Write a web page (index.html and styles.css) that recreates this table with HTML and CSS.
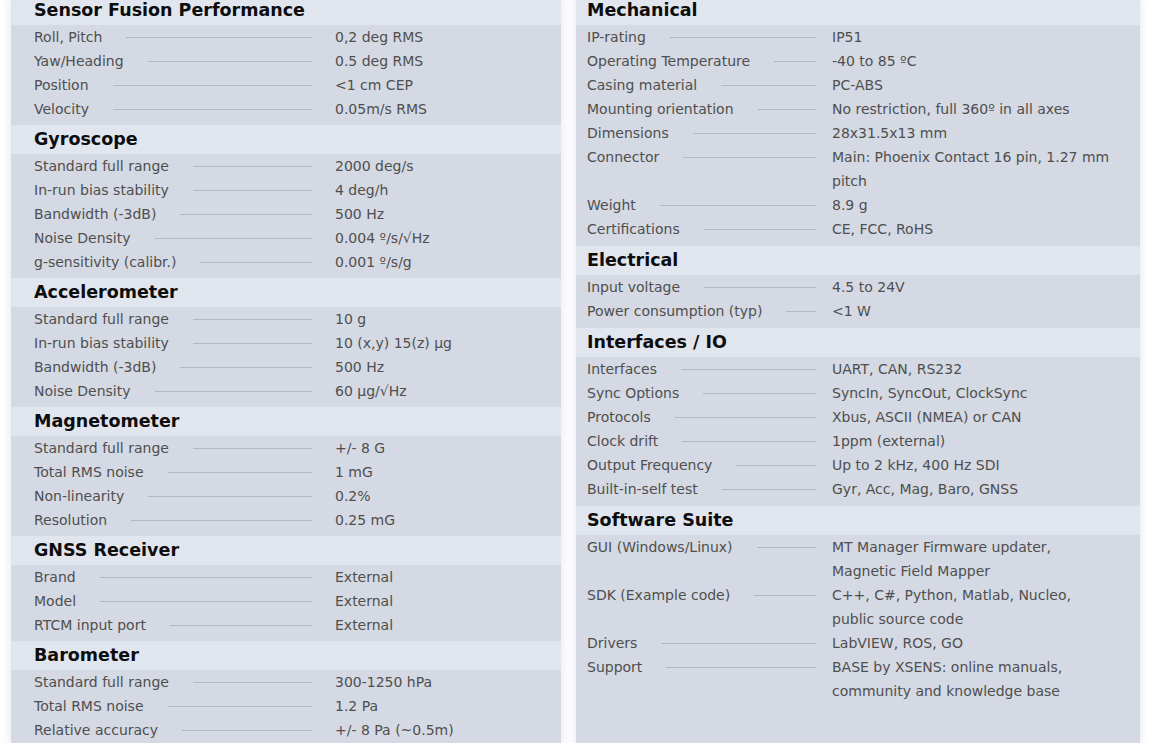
FILE: index.html
```html
<!DOCTYPE html>
<html lang="en">
<head>
<meta charset="utf-8">
<title>Specifications</title>
<link rel="stylesheet" href="styles.css">
</head>
<body>
<main class="sheet">
  <div class="panel panel--left">
    <section class="group">
      <h2 class="group-title">Sensor Fusion Performance</h2>
      <div class="spec"><span class="spec-label">Roll, Pitch</span><span class="spec-value">0,2 deg RMS</span></div>
      <div class="spec"><span class="spec-label">Yaw/Heading</span><span class="spec-value">0.5 deg RMS</span></div>
      <div class="spec"><span class="spec-label">Position</span><span class="spec-value">&lt;1 cm CEP</span></div>
      <div class="spec"><span class="spec-label">Velocity</span><span class="spec-value">0.05m/s RMS</span></div>
    </section>
    <section class="group">
      <h2 class="group-title">Gyroscope</h2>
      <div class="spec"><span class="spec-label">Standard full range</span><span class="spec-value">2000 deg/s</span></div>
      <div class="spec"><span class="spec-label">In-run bias stability</span><span class="spec-value">4 deg/h</span></div>
      <div class="spec"><span class="spec-label">Bandwidth (-3dB)</span><span class="spec-value">500 Hz</span></div>
      <div class="spec"><span class="spec-label">Noise Density</span><span class="spec-value">0.004 º/s/√Hz</span></div>
      <div class="spec"><span class="spec-label">g-sensitivity (calibr.)</span><span class="spec-value">0.001 º/s/g</span></div>
    </section>
    <section class="group">
      <h2 class="group-title">Accelerometer</h2>
      <div class="spec"><span class="spec-label">Standard full range</span><span class="spec-value">10 g</span></div>
      <div class="spec"><span class="spec-label">In-run bias stability</span><span class="spec-value">10 (x,y) 15(z) µg</span></div>
      <div class="spec"><span class="spec-label">Bandwidth (-3dB)</span><span class="spec-value">500 Hz</span></div>
      <div class="spec"><span class="spec-label">Noise Density</span><span class="spec-value">60 µg/√Hz</span></div>
    </section>
    <section class="group">
      <h2 class="group-title">Magnetometer</h2>
      <div class="spec"><span class="spec-label">Standard full range</span><span class="spec-value">+/- 8 G</span></div>
      <div class="spec"><span class="spec-label">Total RMS noise</span><span class="spec-value">1 mG</span></div>
      <div class="spec"><span class="spec-label">Non-linearity</span><span class="spec-value">0.2%</span></div>
      <div class="spec"><span class="spec-label">Resolution</span><span class="spec-value">0.25 mG</span></div>
    </section>
    <section class="group">
      <h2 class="group-title">GNSS Receiver</h2>
      <div class="spec"><span class="spec-label">Brand</span><span class="spec-value">External</span></div>
      <div class="spec"><span class="spec-label">Model</span><span class="spec-value">External</span></div>
      <div class="spec"><span class="spec-label">RTCM input port</span><span class="spec-value">External</span></div>
    </section>
    <section class="group">
      <h2 class="group-title">Barometer</h2>
      <div class="spec"><span class="spec-label">Standard full range</span><span class="spec-value">300-1250 hPa</span></div>
      <div class="spec"><span class="spec-label">Total RMS noise</span><span class="spec-value">1.2 Pa</span></div>
      <div class="spec"><span class="spec-label">Relative accuracy</span><span class="spec-value">+/- 8 Pa (~0.5m)</span></div>
    </section>
  </div>

  <div class="panel panel--right">
    <section class="group">
      <h2 class="group-title">Mechanical</h2>
      <div class="spec"><span class="spec-label">IP-rating</span><span class="spec-value">IP51</span></div>
      <div class="spec"><span class="spec-label">Operating Temperature</span><span class="spec-value">-40 to 85 ºC</span></div>
      <div class="spec"><span class="spec-label">Casing material</span><span class="spec-value">PC-ABS</span></div>
      <div class="spec"><span class="spec-label">Mounting orientation</span><span class="spec-value">No restriction, full 360º in all axes</span></div>
      <div class="spec"><span class="spec-label">Dimensions</span><span class="spec-value">28x31.5x13 mm</span></div>
      <div class="spec"><span class="spec-label">Connector</span><span class="spec-value">Main: Phoenix Contact 16 pin, 1.27 mm pitch</span></div>
      <div class="spec"><span class="spec-label">Weight</span><span class="spec-value">8.9 g</span></div>
      <div class="spec"><span class="spec-label">Certifications</span><span class="spec-value">CE, FCC, RoHS</span></div>
    </section>
    <section class="group">
      <h2 class="group-title">Electrical</h2>
      <div class="spec"><span class="spec-label">Input voltage</span><span class="spec-value">4.5 to 24V</span></div>
      <div class="spec"><span class="spec-label">Power consumption (typ)</span><span class="spec-value">&lt;1 W</span></div>
    </section>
    <section class="group">
      <h2 class="group-title">Interfaces / IO</h2>
      <div class="spec"><span class="spec-label">Interfaces</span><span class="spec-value">UART, CAN, RS232</span></div>
      <div class="spec"><span class="spec-label">Sync Options</span><span class="spec-value">SyncIn, SyncOut, ClockSync</span></div>
      <div class="spec"><span class="spec-label">Protocols</span><span class="spec-value">Xbus, ASCII (NMEA) or CAN</span></div>
      <div class="spec"><span class="spec-label">Clock drift</span><span class="spec-value">1ppm (external)</span></div>
      <div class="spec"><span class="spec-label">Output Frequency</span><span class="spec-value">Up to 2 kHz, 400 Hz SDI</span></div>
      <div class="spec"><span class="spec-label">Built-in-self test</span><span class="spec-value">Gyr, Acc, Mag, Baro, GNSS</span></div>
    </section>
    <section class="group">
      <h2 class="group-title">Software Suite</h2>
      <div class="spec"><span class="spec-label">GUI (Windows/Linux)</span><span class="spec-value">MT Manager Firmware updater, Magnetic Field Mapper</span></div>
      <div class="spec"><span class="spec-label">SDK (Example code)</span><span class="spec-value">C++, C#, Python, Matlab, Nucleo, public source code</span></div>
      <div class="spec"><span class="spec-label">Drivers</span><span class="spec-value">LabVIEW, ROS, GO</span></div>
      <div class="spec"><span class="spec-label">Support</span><span class="spec-value">BASE by XSENS: online manuals, community and knowledge base</span></div>
    </section>
  </div>
</main>
</body>
</html>
```

FILE: styles.css
```css
html, body {
  margin: 0;
  padding: 0;
  background: #ffffff;
}

body {
  font-family: "DejaVu Sans", Verdana, sans-serif;
  overflow: hidden;
}

.sheet {
  display: flex;
  align-items: stretch;
  gap: 15px;
  padding-left: 11px;
  margin-top: -4px;
  height: 750px;
}

.panel {
  background: #d4d9e3;
  box-shadow: 0 0 10px rgba(60, 70, 100, 0.14);
}

.panel--left {
  width: 550px;
  --pad-l: 23px;
  --pad-r: 22px;
  --label-w: 301px;
  --lead-end: 23px;
  --group-gap: 4px;
}

.panel--right {
  width: 564px;
  --pad-l: 11px;
  --pad-r: 27px;
  --label-w: 245px;
  --lead-end: 16px;
  --group-gap: 5px;
}

.group {
  padding-bottom: var(--group-gap);
}

.group-title {
  margin: 0;
  height: 29px;
  line-height: 29px;
  padding-left: var(--pad-l);
  background: #e1e5ed;
  color: #0d0d0d;
  font-size: 17.5px;
  font-weight: bold;
}

.spec {
  display: grid;
  grid-template-columns: var(--label-w) 1fr;
  padding-left: var(--pad-l);
  padding-right: var(--pad-r);
  font-size: 14px;
  line-height: 24px;
  color: #4f4f4f;
}

.spec-label {
  display: flex;
  align-items: center;
  height: 24px;
  white-space: nowrap;
}

.spec-label::after {
  content: "";
  flex: 1;
  height: 1px;
  margin: 1px var(--lead-end) 0 24px;
  background: #b3b8c3;
}
```
